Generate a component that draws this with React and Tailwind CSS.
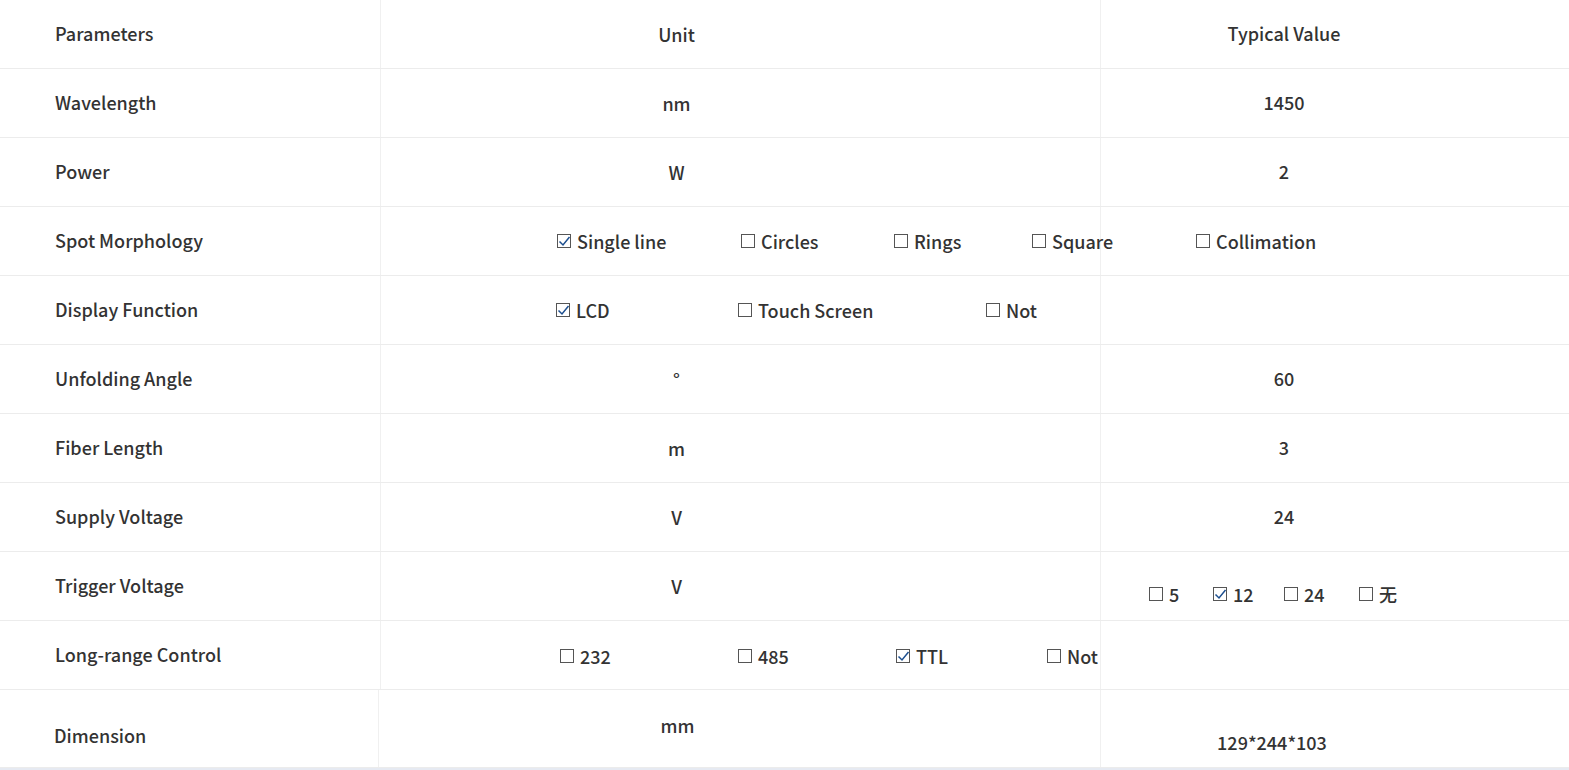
import React from "react"

// Tabla de especificaciones
const Box = ({ checked }) => (
  <span className="relative inline-block h-[14px] w-[14px] shrink-0 border border-[#555] bg-white">
    {checked && (
      <svg viewBox="0 0 14 14" className="absolute left-[-1px] top-[-1px] h-[14px] w-[14px]">
        <path d="M2.5 7.5 L6 11 L12.5 3" fill="none" stroke="#1d4f8f" strokeWidth="1.5" />
      </svg>
    )}
  </span>
)

const Options = ({ items, className = "" }) => (
  <div className={`flex items-center whitespace-nowrap ${className}`}>
    {items.map((it, i) => (
      <div key={i} className="flex shrink-0 items-center gap-[6px]" style={{ width: it.w }}>
        <Box checked={it.checked} />
        <span>{it.label}</span>
      </div>
    ))}
  </div>
)

const rows = [
  { name: "Wavelength", unit: "nm", value: "1450" },
  { name: "Power", unit: "W", value: "2" },
  {
    name: "Spot Morphology",
    span: (
      <Options
        className="pl-[176px]"
        items={[
          { label: "Single line", checked: true, w: 184 },
          { label: "Circles", w: 153 },
          { label: "Rings", w: 138 },
          { label: "Square", w: 164 },
          { label: "Collimation" },
        ]}
      />
    ),
  },
  {
    name: "Display Function",
    span: (
      <Options
        className="pl-[175px]"
        items={[
          { label: "LCD", checked: true, w: 182 },
          { label: "Touch Screen", w: 248 },
          { label: "Not" },
        ]}
      />
    ),
  },
  { name: "Unfolding Angle", unit: "°", value: "60" },
  { name: "Fiber Length", unit: "m", value: "3" },
  { name: "Supply Voltage", unit: "V", value: "24" },
  {
    name: "Trigger Voltage",
    unit: "V",
    valueNode: (
      <Options
        className="pl-[48px] pt-[16px]"
        items={[
          { label: "5", w: 64 },
          { label: "12", checked: true, w: 71 },
          { label: "24", w: 75 },
          { label: "无" },
        ]}
      />
    ),
  },
  {
    name: "Long-range Control",
    span: (
      <Options
        className="pl-[179px] pt-[2px]"
        items={[
          { label: "232", w: 178 },
          { label: "485", w: 158 },
          { label: "TTL", checked: true, w: 151 },
          { label: "Not" },
        ]}
      />
    ),
  },
]

export default function App() {
  return (
    <div
      className="w-[1569px] bg-white text-[18px] font-medium text-[#333]"
      style={{ fontFamily: '"Noto Sans CJK SC", "Noto Sans", sans-serif' }}
    >
      <div className="grid h-[69px] grid-cols-[381px_720px_1fr] border-b border-[#ececec]">
        <div className="flex items-center border-r border-[#f0f0f0] pb-[2px] pl-[55px]">Parameters</div>
        <div className="flex items-center justify-center border-r border-[#f0f0f0] pr-[128px]">Unit</div>
        <div className="flex items-center justify-center pb-[2px] pr-[102px]">Typical Value</div>
      </div>
      {rows.map((r, i) => (
        <div key={i} className="grid h-[69px] grid-cols-[381px_720px_1fr] border-b border-[#ececec]">
          <div className="flex items-center border-r border-[#f0f0f0] pb-[2px] pl-[55px]">{r.name}</div>
          {r.span ? (
            <>
              <div className="relative z-10 flex items-center overflow-visible border-r border-[#f0f0f0]">
                <div className="absolute left-0 top-0 flex h-full items-center">{r.span}</div>
              </div>
              <div />
            </>
          ) : (
            <>
              <div className="flex items-center justify-center border-r border-[#f0f0f0] pr-[128px]">
                {r.unit}
              </div>
              {r.valueNode ? (
                <div className="flex items-center">{r.valueNode}</div>
              ) : (
                <div className="flex items-center justify-center pb-[2px] pr-[102px]">{r.value}</div>
              )}
            </>
          )}
        </div>
      ))}
      <div className="grid h-[78px] grid-cols-[379px_722px_1fr] border-b border-[#ececec]">
        <div className="flex items-center border-r border-[#f0f0f0] pl-[54px] pt-[14px]">Dimension</div>
        <div className="flex items-start justify-center border-r border-[#f0f0f0] pr-[124px] pt-[22px]">mm</div>
        <div className="flex items-end justify-center pb-[11px] pr-[126px]">129*244*103</div>
      </div>
      <div className="h-[3px] bg-[#e6eaf2]" />
    </div>
  )
}
